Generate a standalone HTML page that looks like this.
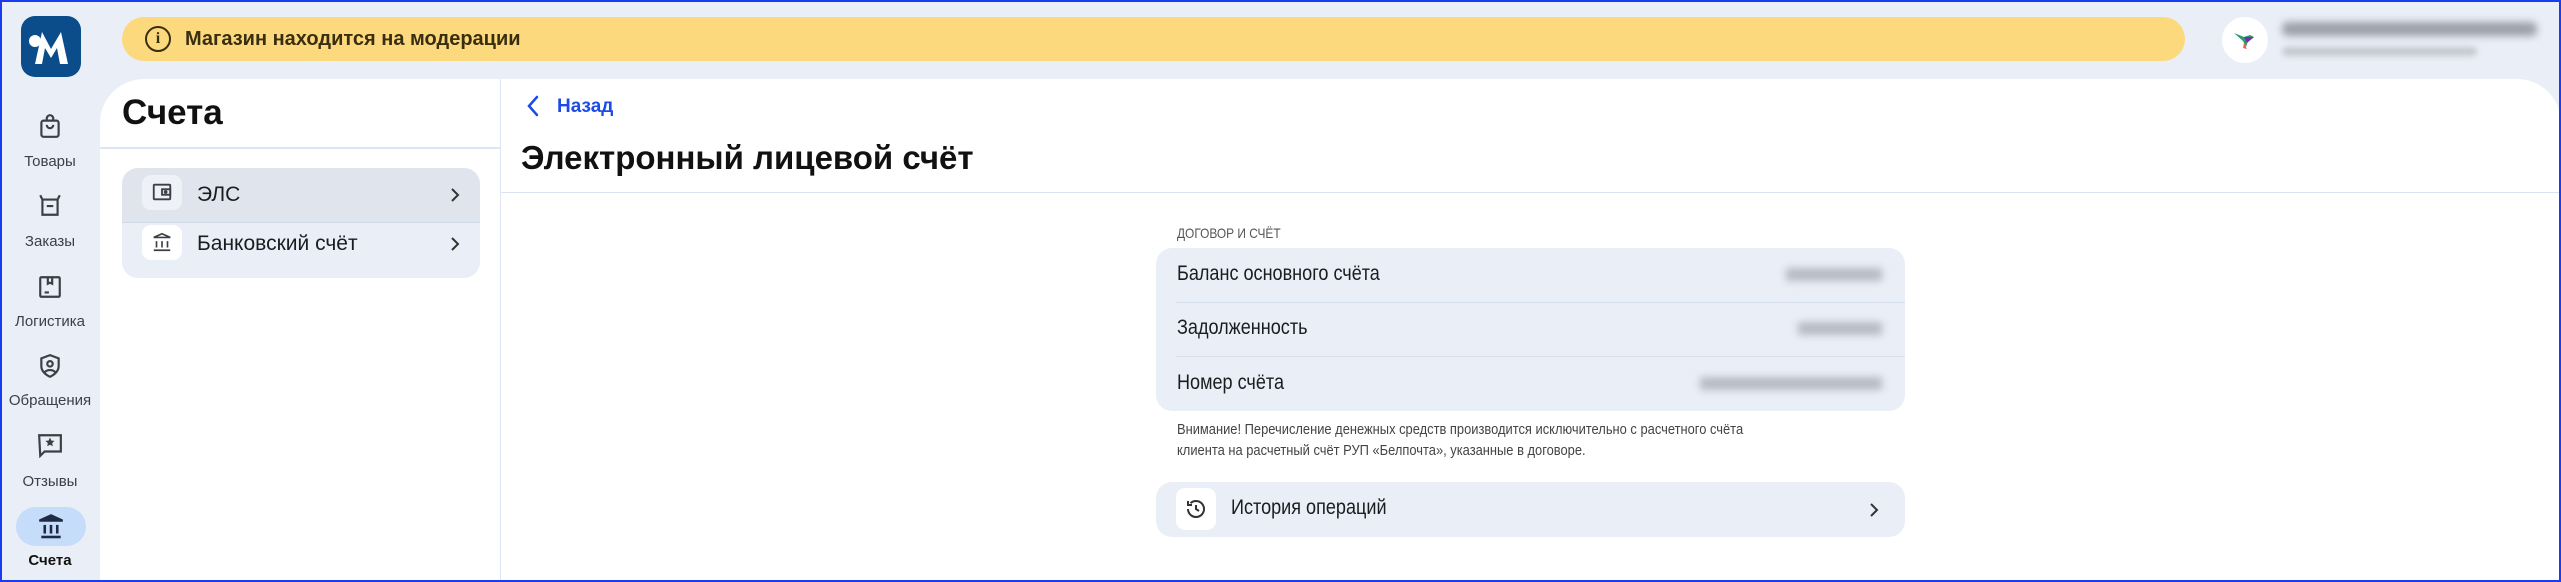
<!DOCTYPE html>
<html><head><meta charset="utf-8"><style>
*{box-sizing:border-box;margin:0;padding:0}
body{width:2561px;height:582px;overflow:hidden;background:#eaeff7;font-family:"Liberation Sans",sans-serif;color:#1a1c1f;position:relative}
.frame{position:absolute;inset:0;border:2px solid #1a3cf0;z-index:10;pointer-events:none}
.abs{position:absolute}
.logo{left:21px;top:16px;width:60px;height:61px;background:#0b4c8a;border-radius:14px}
.banner{left:122px;top:17px;width:2063px;height:44px;background:#fdd97e;border-radius:22px;font-size:20px;font-weight:bold;color:#3a2e10;display:flex;align-items:center;padding-left:23px}
.banner .i{width:26px;height:26px;border:2px solid #3a2e10;border-radius:50%;font-size:16px;display:flex;align-items:center;justify-content:center;margin-right:14px;font-family:"Liberation Serif",serif;font-weight:bold}
.panel{left:100px;top:79px;width:2461px;height:503px;background:#fff;border-radius:44px 44px 0 0}
.ic{position:absolute;left:37px}
.lbl{position:absolute;left:0;width:100px;text-align:center;font-size:15px;color:#3b3f46}
</style></head><body>
<div class="frame"></div>
<div class="abs logo"><svg width="60" height="61" viewBox="0 0 60 61"><path d="M14 48 L21 16 L30 33 L40 16 L47 48 L39 48 L36 32 L30 42 L24 32 L21 48Z" fill="#fff"/><circle cx="14" cy="25" r="6" fill="#fff"/></svg></div>
<div class="abs banner"><span class="i">i</span>Магазин находится на модерации</div>
<div class="abs" style="left:2222px;top:17px;width:46px;height:46px;border-radius:50%;background:#fff"><svg width="46" height="46" viewBox="0 0 46 46"><path d="M12 16 L22 20 L28 18 L32 20 L26 24 L24 30 L21 24Z" fill="#2a9d6a"/><path d="M22 20 L32 20 L25 26Z" fill="#7a2bb5"/><path d="M22 26 L25 32 L21 31Z" fill="#f0604a"/></svg></div>
<div class="abs" style="left:2282px;top:22px;width:255px;height:14px;background:#9aa0a8;border-radius:6px;filter:blur(4px)"></div>
<div class="abs" style="left:2282px;top:47px;width:195px;height:9px;background:#c4c8cf;border-radius:5px;filter:blur(3px)"></div>

<svg class="ic" style="top:112px" width="26" height="28" viewBox="0 0 24 26" fill="none" stroke="#3b3f46" stroke-width="2"><rect x="4" y="8" width="16" height="15" rx="2"/><path d="M9 8V6a3 3 0 0 1 6 0v2M9 12a3 3 0 0 0 6 0"/></svg>
<div class="lbl" style="top:153px">Товары</div>
<svg class="ic" style="top:192px" width="26" height="26" viewBox="0 0 24 24" fill="none" stroke="#3b3f46" stroke-width="2"><path d="M3 3l2 4v14h14V7l2-4M5 7h14M9 13h6"/></svg>
<div class="lbl" style="top:233px">Заказы</div>
<svg class="ic" style="top:274px" width="26" height="26" viewBox="0 0 24 24" fill="none" stroke="#3b3f46" stroke-width="2"><rect x="3" y="3" width="18" height="18" rx="1"/><path d="M10 3v6l2-1 2 1V3M7 17h4"/></svg>
<div class="lbl" style="top:313px">Логистика</div>
<svg class="ic" style="top:353px" width="26" height="26" viewBox="0 0 24 24" fill="none" stroke="#3b3f46" stroke-width="2"><path d="M12 2l8 3v7c0 5-4 8-8 10-4-2-8-5-8-10V5z"/><circle cx="12" cy="10" r="2.5"/><path d="M7 18c2-3 8-3 10 0"/></svg>
<div class="lbl" style="top:392px">Обращения</div>
<svg class="ic" style="top:432px" width="26" height="26" viewBox="0 0 24 24" fill="none" stroke="#3b3f46" stroke-width="2"><path d="M2 3h20v15H7l-4 4z"/><path d="M12 6l1 2.2 2.3.3-1.7 1.6.4 2.3-2-1.1-2 1.1.4-2.3-1.7-1.6 2.3-.3z" fill="#3b3f46" stroke-width="0.8"/></svg>
<div class="lbl" style="top:473px">Отзывы</div>
<div class="abs" style="left:16px;top:507px;width:70px;height:39px;border-radius:20px;background:#c5dcfb"></div>
<svg class="ic" style="left:38px;top:512px" width="26" height="28" viewBox="0 0 24 26" fill="#1f2a44"><path d="M12 2L1 7v2h22V7z"/><rect x="5" y="12" width="2.4" height="8"/><rect x="10.8" y="12" width="2.4" height="8"/><rect x="16.6" y="12" width="2.4" height="8"/><rect x="3" y="22" width="18" height="2.4"/></svg>
<div class="lbl" style="top:552px;font-weight:bold;color:#111">Счета</div>

<div class="abs panel"></div>
<div class="abs" style="left:500px;top:79px;width:1px;height:503px;background:#dde6f2"></div>
<div class="abs" style="left:122px;top:93px;font-size:35px;font-weight:bold;color:#111">Счета</div>
<div class="abs" style="left:100px;top:147px;width:400px;height:2px;background:#dce6f3"></div>
<div class="abs" style="left:122px;top:168px;width:358px;height:110px;border-radius:16px;background:#eaeff7;overflow:hidden">
 <div style="position:absolute;left:0;top:0;width:358px;height:55px;background:#e0e5ed;border-bottom:1px solid #d0d9e6"></div>
 <div style="position:absolute;left:20px;top:7px;width:40px;height:35px;border-radius:9px;background:#eef1f5"></div>
 <svg class="abs" style="left:29px;top:13px" width="22" height="22" viewBox="0 0 24 24" fill="none" stroke="#3b3f46" stroke-width="2"><rect x="3" y="4" width="18" height="16" rx="1"/><rect x="12" y="9" width="9" height="6"/><circle cx="16" cy="12" r="1" fill="#3b3f46"/></svg>
 <span style="position:absolute;left:75px;top:15px;font-size:21px">ЭЛС</span>
 <svg class="abs" style="left:328px;top:19px" width="10" height="16" viewBox="0 0 10 16" fill="none" stroke="#333" stroke-width="2"><path d="M2 2l6 6-6 6"/></svg>
 <div style="position:absolute;left:20px;top:57px;width:40px;height:35px;border-radius:9px;background:#fff"></div>
 <svg class="abs" style="left:29px;top:63px" width="22" height="22" viewBox="0 0 24 24" fill="none" stroke="#3b3f46" stroke-width="1.8"><path d="M12 3L3 7h18z"/><path d="M6 11v7M12 11v7M18 11v7M3 21h18"/></svg>
 <span style="position:absolute;left:75px;top:64px;font-size:21px">Банковский счёт</span>
 <svg class="abs" style="left:328px;top:68px" width="10" height="16" viewBox="0 0 10 16" fill="none" stroke="#333" stroke-width="2"><path d="M2 2l6 6-6 6"/></svg>
</div>

<svg class="abs" style="left:526px;top:95px" width="14" height="22" viewBox="0 0 14 22" fill="none" stroke="#1c4be6" stroke-width="2.5" stroke-linecap="round"><path d="M11 2L3 11l8 9"/></svg>
<div class="abs" style="left:557px;top:96px;font-size:19px;font-weight:bold;color:#1c4be6">Назад</div>
<div class="abs" style="left:521px;top:139px;font-size:33px;font-weight:bold;color:#111">Электронный лицевой счёт</div>
<div class="abs" style="left:501px;top:192px;width:2060px;height:1px;background:#d8e2f0"></div>

<div class="abs" style="left:1177px;top:225px;font-size:14px;color:#555;transform:scaleX(.85);transform-origin:left">ДОГОВОР И СЧЁТ</div>
<div class="abs" style="left:1156px;top:248px;width:749px;height:163px;border-radius:16px;background:#eaeff7"></div>
<div class="abs" style="left:1176px;top:302px;width:729px;height:1px;background:#d6e0ec"></div>
<div class="abs" style="left:1176px;top:356px;width:729px;height:1px;background:#d6e0ec"></div>
<div class="abs" style="left:1177px;top:262px;font-size:21px;transform:scaleX(.86);transform-origin:left">Баланс основного счёта</div>
<div class="abs" style="left:1177px;top:316px;font-size:21px;transform:scaleX(.86);transform-origin:left">Задолженность</div>
<div class="abs" style="left:1177px;top:371px;font-size:21px;transform:scaleX(.86);transform-origin:left">Номер счёта</div>
<div class="abs" style="left:1786px;top:268px;width:96px;height:13px;background:#b6bac2;filter:blur(4px)"></div>
<div class="abs" style="left:1798px;top:322px;width:84px;height:13px;background:#b6bac2;filter:blur(4px)"></div>
<div class="abs" style="left:1700px;top:377px;width:182px;height:13px;background:#b6bac2;filter:blur(4px)"></div>
<div class="abs" style="left:1177px;top:419px;font-size:15px;color:#444;line-height:21px;transform:scaleX(.86);transform-origin:left;white-space:nowrap">Внимание! Перечисление денежных средств производится исключительно с расчетного счёта<br>клиента на расчетный счёт РУП «Белпочта», указанные в договоре.</div>
<div class="abs" style="left:1156px;top:482px;width:749px;height:55px;border-radius:16px;background:#eaeff7"></div>
<div class="abs" style="left:1176px;top:488px;width:40px;height:42px;border-radius:9px;background:#fff"></div>
<svg class="abs" style="left:1184px;top:497px" width="24" height="24" viewBox="0 0 24 24" fill="none" stroke="#333" stroke-width="2"><path d="M4 12a8 8 0 1 0 2.5-5.8M4 4v4h4M12 8v4l3 2"/></svg>
<div class="abs" style="left:1231px;top:496px;font-size:21px;transform:scaleX(.86);transform-origin:left">История операций</div>
<svg class="abs" style="left:1869px;top:502px" width="10" height="16" viewBox="0 0 10 16" fill="none" stroke="#333" stroke-width="2"><path d="M2 2l6 6-6 6"/></svg>
</body></html>
